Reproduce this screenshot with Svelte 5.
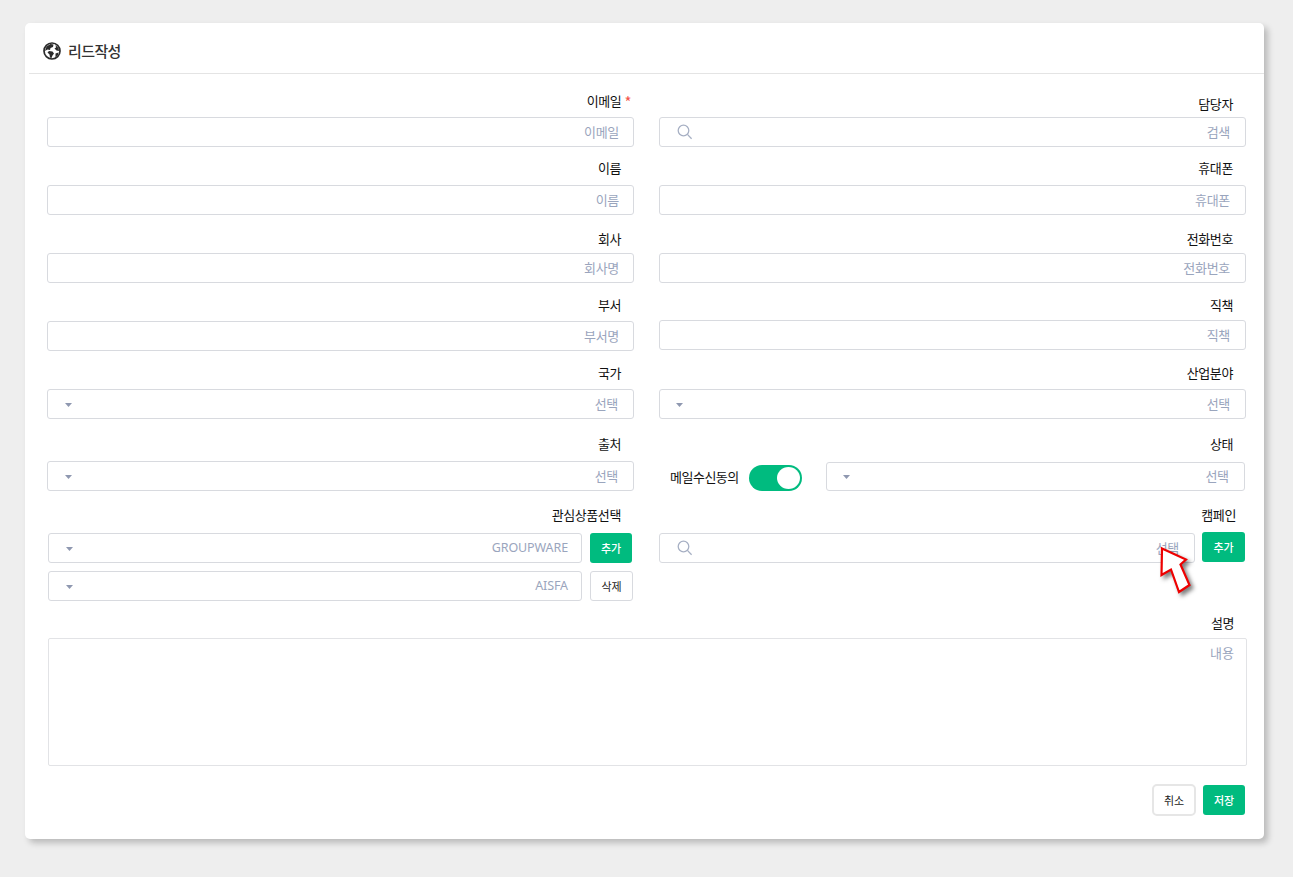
<script lang="ts">
	let mailConsent = $state(true);

	const rows = [
		[
			{ label: '이메일', kind: 'input', hint: '이메일', required: true },
			{ label: '담당자', kind: 'search', hint: '검색', low: true }
		],
		[
			{ label: '이름', kind: 'input', hint: '이름', up: true },
			{ label: '휴대폰', kind: 'input', hint: '휴대폰', up: true }
		],
		[
			{ label: '회사', kind: 'input', hint: '회사명', high: true },
			{ label: '전화번호', kind: 'input', hint: '전화번호', high: true }
		],
		[
			{ label: '부서', kind: 'input', hint: '부서명' },
			{ label: '직책', kind: 'input', hint: '직책', nudge: true }
		],
		[
			{ label: '국가', kind: 'select', hint: '선택' },
			{ label: '산업분야', kind: 'select', hint: '선택' }
		]
	];
</script>

{#snippet caret()}
	<svg class="caret" width="7" height="4" viewBox="0 0 7 4"><path d="M0 0h7L3.500 4z" /></svg>
{/snippet}

{#snippet lens()}
	<svg class="lens" width="16" height="16" viewBox="0 0 16 16" fill="none">
		<circle cx="6.5" cy="6.5" r="5.3" />
		<path d="M10.4 10.4 14.6 14.8" />
	</svg>
{/snippet}

<div class="page">
	<section class="card">
		<header class="card-head">
			<svg class="globe" width="18" height="18" viewBox="0 0 18 18">
				<circle cx="9" cy="9" r="8" fill="#fff" stroke="#2b2b2b" stroke-width="1.7" />
				<path fill="#2b2b2b" d="M3.500 4.500 7.500 2 10.500 2.500 10 5 7.500 6 7 8 4.500 7.500 2 9zM6 9 9.500 9.500 11 11.500 9.500 13.500 8.500 16 7 15.500 6.500 12.500 4.500 10.500zM12.500 3 15.500 6 16 9 13.500 8.500 11.500 6.500 13 5.500zM12.500 11.500 15.500 10.500 15 13 12.500 15.500z" />
			</svg>
			<h2>리드작성</h2>
		</header>

		<form class="form">
			{#each rows as row}
				<div class="row">
					{#each row as f}
						<div class="field">
							<label class="lab" class:low={f.low} class:high={f.high} class:up={f.up} class:nudge={f.nudge}>
								{f.label}{#if f.required}<em>*</em>{/if}
							</label>
							{#if f.kind === 'input'}
								<input class="ctl" placeholder={f.hint} />
							{:else if f.kind === 'search'}
								<div class="ctl box">{@render lens()}<span>{f.hint}</span></div>
							{:else}
								<div class="ctl box sel">{@render caret()}<span>{f.hint}</span></div>
							{/if}
						</div>
					{/each}
				</div>
			{/each}

			<div class="row tall">
				<div class="field">
					<label class="lab source">출처</label>
					<div class="ctl box sel">{@render caret()}<span>선택</span></div>
				</div>
				<div class="field">
					<label class="lab source">상태</label>
					<div class="consent">
						<span class="consent-text">메일수신동의</span>
						<button type="button" class="toggle" class:on={mailConsent} aria-label="메일수신동의" onclick={() => (mailConsent = !mailConsent)}></button>
						<div class="ctl box sel status">{@render caret()}<span>선택</span></div>
					</div>
				</div>
			</div>

			<div class="row tall">
				<div class="field">
					<label class="lab">관심상품선택</label>
					<div class="product-list">
						<div class="line">
							<div class="ctl box sel grow">{@render caret()}<span class="latin">GROUPWARE</span></div>
							<button type="button" class="btn green">추가</button>
						</div>
						<div class="line">
							<div class="ctl box sel grow">{@render caret()}<span class="latin">AISFA</span></div>
							<button type="button" class="btn plain">삭제</button>
						</div>
					</div>
				</div>
				<div class="field">
					<label class="lab camp">캠페인</label>
					<div class="line camp-line">
						<div class="ctl box grow">{@render lens()}<span class="camp-hint">선택</span></div>
						<button type="button" class="btn green">추가</button>
					</div>
				</div>
			</div>

			<div class="desc">
				<label class="lab">설명</label>
				<textarea placeholder="내용"></textarea>
			</div>

			<div class="actions">
				<button type="button" class="btn cancel">취소</button>
				<button type="button" class="btn green">저장</button>
			</div>
		</form>

		<svg class="pointer" width="38" height="56" viewBox="0 0 38 56">
			<path d="M3 4.500 27 15.500 21.500 20.500 30.500 41 20 48 12 25.500 2.500 31z" />
		</svg>
	</section>
</div>

<style>
	:global(body) {
		background: #eeeeee;
		font-family: "Noto Sans CJK KR", "Noto Sans", sans-serif;
	}

	.page {
		padding: 23px 29px 38px 25px;
	}

	.card {
		position: relative;
		height: 816px;
		box-sizing: border-box;
		background: #fff;
		border-radius: 5px;
		box-shadow: 4px 4px 6px rgba(0, 0, 0, 0.22);
	}

	.card-head {
		display: flex;
		align-items: center;
		gap: 7px;
		height: 51px;
		box-sizing: border-box;
		margin-left: 4px;
		padding: 5px 0 0 14px;
		border-bottom: 1px solid #e4e4e4;
	}

	.card-head h2 {
		margin: 0;
		font-size: 15px;
		font-weight: 500;
		letter-spacing: -0.6px;
		color: #333;
	}

	.form {
		padding: 5px 18px 0 22px;
	}

	.row {
		display: grid;
		grid-template-columns: 587px 587px;
		column-gap: 25px;
	}

	.field {
		display: flex;
		flex-direction: column;
		align-items: stretch;
	}

	.lab {
		display: block;
		height: 38px;
		box-sizing: border-box;
		padding: 12px 13px 0 0;
		text-align: right;
		font-size: 13px;
		line-height: 20px;
		font-weight: 400;
		letter-spacing: -0.4px;
		color: #111;
	}

	.lab em {
		font-style: normal;
		font-size: 15px;
		line-height: 15px;
		vertical-align: -2px;
		color: #f4554c;
		margin-left: 3px;
		margin-right: -10px;
	}

	.lab.low {
		padding-top: 15px;
	}

	.lab.high {
		padding-top: 14px;
	}

	.lab.up {
		padding-top: 11px;
	}

	.lab.nudge {
		height: 37px;
		padding-top: 12px;
	}

	.row.tall .lab {
		height: 42px;
		padding-top: 14px;
	}

	.row.tall .lab.source {
		padding-top: 15px;
	}

	.ctl {
		height: 30px;
		box-sizing: border-box;
		border: 1px solid #d8dadf;
		border-radius: 3px;
		background: #fff;
		font: inherit;
		font-size: 13px;
		letter-spacing: -0.3px;
		color: #9aa5bd;
	}

	input.ctl {
		padding: 0 14px 2px 10px;
		text-align: right;
		outline: none;
	}

	.field:last-child input.ctl {
		padding-right: 15px;
	}

	input.ctl::placeholder,
	textarea::placeholder {
		color: #9aa5bd;
		opacity: 1;
	}

	.box {
		display: flex;
		align-items: center;
		justify-content: space-between;
		padding: 0 15px 2px 17px;
	}

	.field:last-child .sel {
		padding-left: 16px;
	}

	.caret {
		margin-top: 3px;
	}

	.caret path {
		fill: #8f98b0;
	}

	.lens {
		margin-top: 1px;
	}

	.lens circle,
	.lens path {
		stroke: #a7b0c4;
		stroke-width: 1.3;
	}

	.consent {
		display: flex;
		align-items: center;
		height: 30px;
	}

	.consent-text {
		margin-left: 11px;
		font-size: 13px;
		letter-spacing: -0.5px;
		font-weight: 400;
		color: #111;
	}

	.toggle {
		width: 53px;
		height: 26px;
		margin: 4px 0 0 10px;
		padding: 0;
		border: 0;
		border-radius: 13px;
		background: #c5c9d2;
		position: relative;
		cursor: pointer;
	}

	.toggle.on {
		background: #00bb7f;
	}

	.toggle::after {
		content: "";
		position: absolute;
		top: 2px;
		left: 2px;
		width: 23px;
		height: 22px;
		border-radius: 50%;
		background: #fff;
	}

	.toggle.on::after {
		left: 28px;
	}

	.status {
		width: 419px;
		margin-left: 24px;
		height: 29px;
	}

	.line {
		display: flex;
		align-items: center;
	}

	.grow {
		flex: 1;
		min-width: 0;
	}

	.product-list {
		display: flex;
		flex-direction: column;
		gap: 8px;
		padding-left: 1px;
	}

	.product-list .line {
		gap: 8px;
	}

	.product-list .grow {
		flex: 0 0 534px;
		padding-right: 13px;
	}

	.latin {
		font-family: "Noto Sans", sans-serif;
		font-size: 12.500px;
		letter-spacing: -0.1px;
	}

	.camp-line {
		gap: 7px;
		padding-right: 1px;
	}

	.camp-hint {
		color: #9aa5bd;
	}

	.lab.camp {
		padding-right: 10px;
	}

	.btn {
		height: 30px;
		padding: 0;
		box-sizing: border-box;
		border-radius: 3px;
		font: inherit;
		font-size: 11px;
		font-weight: 500;
		cursor: pointer;
	}

	.green {
		width: 42px;
		border: 0;
		background: #00bb7f;
		color: #fff;
	}

	.camp-line .green {
		width: 43px;
		margin-top: -2px;
	}

	.plain {
		width: 43px;
		border: 1px solid #d8dadf;
		background: #fff;
		color: #222;
		font-weight: 400;
	}

	.desc {
		padding-left: 1px;
	}

	.desc .lab {
		height: 37px;
		padding: 12px 12px 0 0;
	}

	.desc textarea {
		display: block;
		width: 1199px;
		height: 128px;
		box-sizing: border-box;
		padding: 4px 12px;
		border: 1px solid #e2e3e6;
		border-radius: 2px;
		font: inherit;
		font-size: 13px;
		text-align: right;
		resize: none;
		outline: none;
	}

	.actions {
		display: flex;
		justify-content: flex-end;
		align-items: center;
		gap: 7px;
		margin-top: 18px;
		padding-right: 1px;
	}

	.cancel {
		width: 44px;
		height: 32px;
		border: 2px solid #e6e6e6;
		border-radius: 5px;
		background: #fff;
		color: #222;
		font-weight: 400;
	}

	.pointer {
		position: absolute;
		left: 1134px;
		top: 521px;
		filter: drop-shadow(3px 3px 2px rgba(0, 0, 0, 0.5));
	}

	.pointer path {
		fill: #fff;
		stroke: #ee0000;
		stroke-width: 2.2;
		stroke-linejoin: miter;
	}
</style>
